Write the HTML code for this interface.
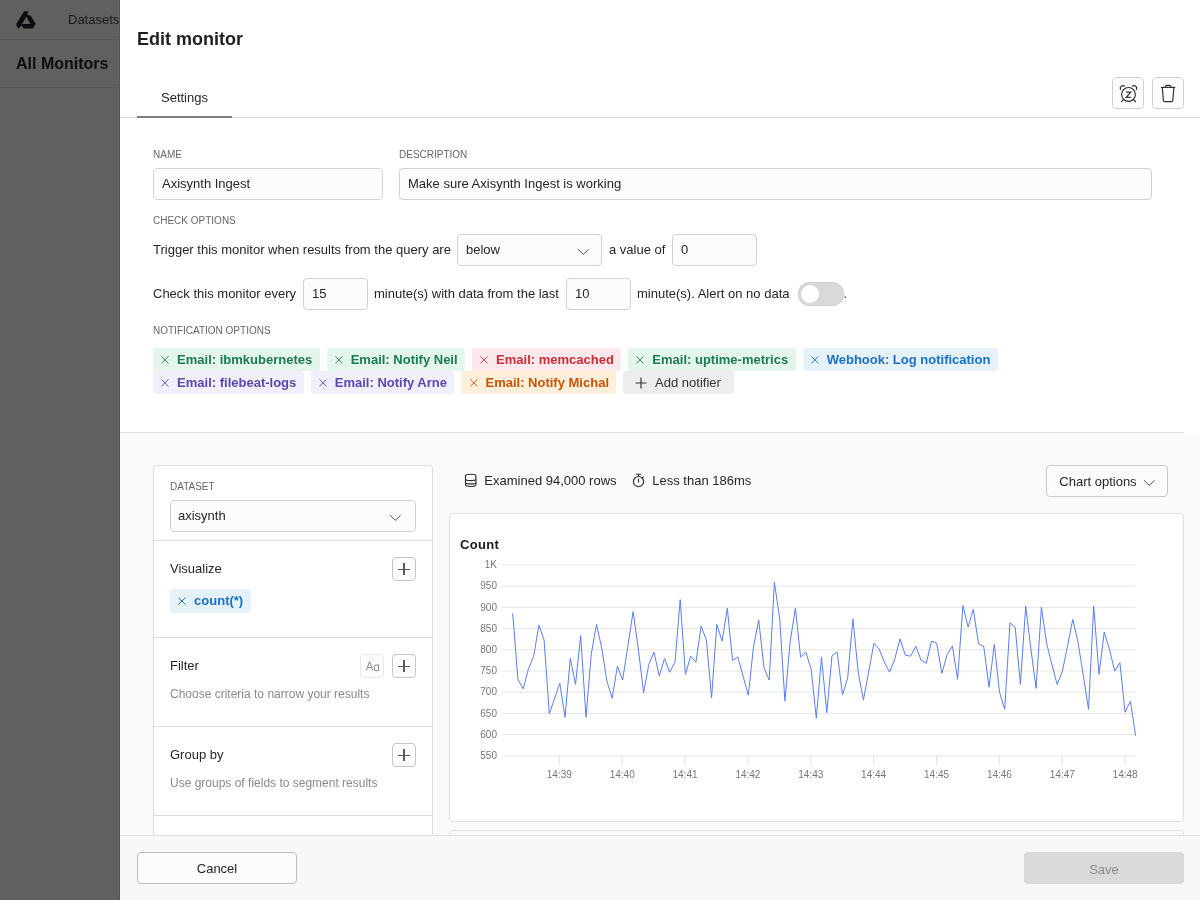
<!DOCTYPE html>
<html><head><meta charset="utf-8">
<style>
*{box-sizing:border-box;margin:0;padding:0}
html,body{width:1200px;height:900px;overflow:hidden;background:#fff}
#wrap{position:absolute;left:0;top:0;width:1200px;height:900px;will-change:transform}
body{font-family:"Liberation Sans",sans-serif;font-size:13px;color:#262626;position:relative}
.abs{position:absolute}
#side{left:0;top:0;width:120px;height:900px;background:#606060}
#side .hl{position:absolute;left:0;width:120px;height:1px;background:#575757}
.lbl{position:absolute;font-size:10px;color:#666;line-height:12px;white-space:nowrap}
.inp{position:absolute;height:32px;border:1px solid #d1d1d1;border-radius:4px;background:#fcfcfc;padding-left:8px;line-height:30px;color:#262626;white-space:nowrap}
.txt{position:absolute;line-height:16px;white-space:nowrap}
.ibtn{position:absolute;width:32px;height:32px;border:1px solid #d1d1d1;border-radius:4px;background:#fcfcfc}
.trow{position:absolute;left:153px;display:flex;gap:7px}
.tag{position:relative;height:22.7px;border-radius:3px;font-weight:bold;line-height:22px;padding-top:1px;white-space:nowrap;padding-left:24.1px;padding-right:7.4px}
.tag svg{position:absolute;left:8.2px;top:7.6px}
.g{background:#e4f5eb;color:#1d7a55}
.p{background:#f1eefd;color:#5a48b0}
.r{background:#fde9eb;color:#cc2b3a}
.o{background:#fdefda;color:#c95400}
.b{background:#e5f2fc;color:#1a70c8}
.sec{position:absolute;left:153px;width:280px;border-left:1px solid #dcdcdc;border-right:1px solid #dcdcdc;background:#fff}
.pbtn{position:absolute;width:24px;height:24px;border:1px solid #c4c4c4;border-radius:4px;background:#fcfcfc}
.pbtn:before{content:"";position:absolute;left:4.8px;top:10.6px;width:12.6px;height:1.3px;background:#5a5a5a}
.pbtn:after{content:"";position:absolute;left:10.45px;top:4.8px;width:1.3px;height:12.6px;background:#5a5a5a}
.yl{font-family:"Liberation Sans",sans-serif;font-size:10px;fill:#777}
</style></head><body><div id="wrap">
<div id="side" class="abs">
  <svg class="abs" style="left:0;top:0" width="40" height="40" viewBox="0 0 40 40"><path fill="#0b0b10" fill-rule="evenodd" d="M24 11.2L28.8 11.5L27.2 14.7L30.7 15.7L35.7 23.7L32.8 28.5L23.7 28.5L21.6 25.3L18.4 28.8L16 24.5ZM26.4 16.8L30.4 24L21.9 24Z"/></svg>
  <div class="txt" style="left:68px;top:12px;font-size:13px;color:#1a1a1a">Datasets</div>
  <div class="hl" style="top:39px"></div>
  <div class="txt" style="left:16px;top:55px;font-size:16px;font-weight:bold;color:#0d0d0d;line-height:18px">All Monitors</div>
  <div class="hl" style="top:87px"></div>
</div>

<div class="abs" style="left:119px;top:0;width:1px;height:900px;background:#545454"></div>
<!-- header -->
<div class="txt" style="left:137px;top:29px;font-size:18px;font-weight:bold;line-height:20px;color:#1f1f1f">Edit monitor</div>
<div class="txt" style="left:161px;top:90px;color:#262626">Settings</div>
<div class="abs" style="left:120px;top:117px;width:1080px;height:1px;background:#dedede"></div>
<div class="abs" style="left:137px;top:116px;width:95px;height:2px;background:#808080"></div>
<div class="ibtn" style="left:1112px;top:77px">
  <svg class="abs" style="left:-1px;top:-1px" width="32" height="32" viewBox="1112 77 32 32" fill="none" stroke="#333" stroke-width="1.2" stroke-linecap="round">
    <circle cx="1128.5" cy="94.4" r="6.9"/>
    <path d="M1120.5 89.4a2.7 2.7 0 0 1 4-3.3M1132.5 86.1a2.7 2.7 0 0 1 4 3.3M1123.4 99.6l-1.9 1.9M1133.6 99.6l1.9 1.9"/>
    <path d="M1126.1 92.1h4.7l-4.7 5.3h4.7" stroke-linejoin="miter" stroke-linecap="butt"/>
  </svg>
</div>
<div class="ibtn" style="left:1152px;top:77px">
  <svg class="abs" style="left:-1px;top:-1px" width="32" height="32" viewBox="1152 77 32 32" fill="none" stroke="#333" stroke-width="1.2" stroke-linecap="round" stroke-linejoin="round">
    <path d="M1161.4 87.3h13.4M1165.6 87.2v-.6a1.2 1.2 0 0 1 1.2-1.2h2.8a1.2 1.2 0 0 1 1.2 1.2v.6M1162.3 87.6l1.1 12.9q.1 1.1 1.2 1.1h7q1.1 0 1.2-1.1l1.1-12.9"/>
  </svg>
</div>

<!-- form -->
<div class="lbl" style="left:153px;top:149px">NAME</div>
<div class="lbl" style="left:399px;top:149px">DESCRIPTION</div>
<div class="inp" style="left:153px;top:168px;width:230px">Axisynth Ingest</div>
<div class="inp" style="left:399px;top:168px;width:753px">Make sure Axisynth Ingest is working</div>
<div class="lbl" style="left:153px;top:215px">CHECK OPTIONS</div>
<div class="txt" style="left:153px;top:242px">Trigger this monitor when results from the query are</div>
<div class="inp" style="left:457px;top:234px;width:145px">below
  <svg class="abs" style="left:119px;top:13px" width="13" height="8" viewBox="0 0 13 8"><path d="M1 1.3l5.3 5 5.3-5" fill="none" stroke="#444" stroke-width="0.95"/></svg>
</div>
<div class="txt" style="left:609px;top:242px">a value of</div>
<div class="inp" style="left:672px;top:234px;width:85px">0</div>
<div class="txt" style="left:153px;top:286px">Check this monitor every</div>
<div class="inp" style="left:303px;top:278px;width:65px">15</div>
<div class="txt" style="left:374px;top:286px">minute(s) with data from the last</div>
<div class="inp" style="left:566px;top:278px;width:65px">10</div>
<div class="txt" style="left:637px;top:286px">minute(s). Alert on no data</div>
<div class="abs" style="left:798px;top:282px;width:46px;height:24px;border-radius:12px;background:#d9d9d9;box-shadow:inset 0 0 0 1px #d0d0d0"></div>
<div class="abs" style="left:801px;top:285px;width:18px;height:18px;border-radius:9px;background:#fff"></div>
<div class="txt" style="left:843.6px;top:286px">.</div>
<div class="lbl" style="left:153px;top:325px">NOTIFICATION OPTIONS</div>

<!-- tags -->
<div class="trow" style="top:348px"><div class="tag g"><svg width="8" height="8" viewBox="0 0 8 8"><path d="M0.4 0.4l7 7M7.4 0.4l-7 7" stroke="currentColor" stroke-width="0.9"/></svg>Email: ibmkubernetes</div><div class="tag g"><svg width="8" height="8" viewBox="0 0 8 8"><path d="M0.4 0.4l7 7M7.4 0.4l-7 7" stroke="currentColor" stroke-width="0.9"/></svg>Email: Notify Neil</div><div class="tag r"><svg width="8" height="8" viewBox="0 0 8 8"><path d="M0.4 0.4l7 7M7.4 0.4l-7 7" stroke="currentColor" stroke-width="0.9"/></svg>Email: memcached</div><div class="tag g"><svg width="8" height="8" viewBox="0 0 8 8"><path d="M0.4 0.4l7 7M7.4 0.4l-7 7" stroke="currentColor" stroke-width="0.9"/></svg>Email: uptime-metrics</div><div class="tag b"><svg width="8" height="8" viewBox="0 0 8 8"><path d="M0.4 0.4l7 7M7.4 0.4l-7 7" stroke="currentColor" stroke-width="0.9"/></svg>Webhook: Log notification</div></div>
<div class="trow" style="top:371.4px"><div class="tag p"><svg width="8" height="8" viewBox="0 0 8 8"><path d="M0.4 0.4l7 7M7.4 0.4l-7 7" stroke="currentColor" stroke-width="0.9"/></svg>Email: filebeat-logs</div><div class="tag p"><svg width="8" height="8" viewBox="0 0 8 8"><path d="M0.4 0.4l7 7M7.4 0.4l-7 7" stroke="currentColor" stroke-width="0.9"/></svg>Email: Notify Arne</div><div class="tag o"><svg width="8" height="8" viewBox="0 0 8 8"><path d="M0.4 0.4l7 7M7.4 0.4l-7 7" stroke="currentColor" stroke-width="0.9"/></svg>Email: Notify Michal</div><div class="tag" style="background:#ededed;color:#333;font-weight:normal;padding-left:31.7px;padding-right:13.1px"><svg width="12" height="12" viewBox="0 0 12 12" style="left:12.1px;top:5.5px"><path d="M6 0.5v11M0.5 6h11" stroke="#333" stroke-width="1.2"/></svg>Add notifier</div></div>

<div class="abs" style="left:120px;top:432px;width:1064px;height:1px;background:#dedede"></div>
<div class="abs" style="left:120px;top:433px;width:1080px;height:402px;background:#fafafa"></div>

<!-- left query panel -->
<div class="sec" style="top:465px;height:76px;border-top:1px solid #dcdcdc;border-radius:4px 4px 0 0">
  <div class="lbl" style="left:16px;top:15px">DATASET</div>
  <div class="inp" style="left:16px;top:34px;width:246px;height:32px;padding-left:7px">axisynth
    <svg class="abs" style="left:218px;top:13px" width="13" height="8" viewBox="0 0 13 8"><path d="M1 1.3l5.3 5 5.3-5" fill="none" stroke="#444" stroke-width="0.95"/></svg>
  </div>
</div>
<div class="sec" style="top:540px;height:98px;border-top:1px solid #dcdcdc">
  <div class="txt" style="left:16px;top:20px">Visualize</div>
  <div class="pbtn" style="left:238px;top:16px"></div>
  <div class="tag b" style="position:absolute;left:16px;top:48px;height:24px;line-height:22px;padding-top:1px;padding-left:24.1px;padding-right:7.3px"><svg width="8" height="8" viewBox="0 0 8 8" style="top:8px"><path d="M0.5 0.5l7 7M7.5 0.5l-7 7" stroke="currentColor" stroke-width="1"/></svg>count(*)</div>
</div>
<div class="sec" style="top:637px;height:90px;border-top:1px solid #dcdcdc">
  <div class="txt" style="left:16px;top:20px">Filter</div>
  <div class="abs" style="left:206px;top:16px;width:24px;height:24px;border:1px solid #e8e8e8;border-radius:4px;background:#fcfcfc"><svg class="abs" style="left:-1px;top:-1px" width="24" height="24" viewBox="360 654 24 24" fill="none" stroke="#7a7a7a" stroke-width="0.9"><path d="M366.3 670.6L369.6 661.6L372.9 670.6M367.5 667.6h4.2"/><path d="M378.6 664.7v5.9M378.6 665h-2.4a1.9 1.9 0 0 0 -1.9 1.9v1.8a1.9 1.9 0 0 0 1.9 1.9h2.4"/></svg></div>
  <div class="pbtn" style="left:238px;top:16px"></div>
  <div class="txt" style="left:16px;top:48px;font-size:12px;color:#8a8a8a">Choose criteria to narrow your results</div>
</div>
<div class="sec" style="top:726px;height:90px;border-top:1px solid #dcdcdc">
  <div class="txt" style="left:16px;top:20px">Group by</div>
  <div class="pbtn" style="left:238px;top:16px"></div>
  <div class="txt" style="left:16px;top:48px;font-size:12px;color:#8a8a8a">Use groups of fields to segment results</div>
</div>
<div class="sec" style="top:815px;height:20px;border-top:1px solid #dcdcdc"></div>

<!-- chart area -->
<svg class="abs" style="left:460px;top:470px" width="20" height="20" viewBox="460 470 20 20" fill="none" stroke="#2a2a2a" stroke-width="1.1">
  <path d="M465.5 476a5.2 1.7 0 0 1 10.4 0v8.8a5.2 1.7 0 0 1 -10.4 0z"/>
  <path d="M465.5 479.3a5.2 1.3 0 0 0 10.4 0M465.5 482.4a5.2 1.5 0 0 0 10.4 0"/>
</svg>
<div class="txt" style="left:484.3px;top:473px">Examined 94,000 rows</div>
<svg class="abs" style="left:631px;top:472px" width="15" height="16" viewBox="0 0 15 16" fill="none" stroke="#333" stroke-width="1.1" stroke-linecap="round">
  <circle cx="7.5" cy="9.6" r="5.1"/>
  <path d="M5.3 2.3h4.4M7.5 2.3v2.2M7.5 7.1v3M11.2 6l1-1"/>
</svg>
<div class="txt" style="left:652.3px;top:473px">Less than 186ms</div>
<div class="abs" style="left:1046px;top:465px;width:122px;height:32px;border:1px solid #c9c9c9;border-radius:4px;background:#fcfcfc;padding-left:12.3px;padding-top:1px;line-height:30px">Chart options
  <svg class="abs" style="left:96px;top:13px" width="13" height="8" viewBox="0 0 13 8"><path d="M1 1.3l5.3 5 5.3-5" fill="none" stroke="#444" stroke-width="0.95"/></svg>
</div>
<div class="abs" style="left:449px;top:513px;width:735px;height:309px;border:1px solid #dedede;border-radius:4px;background:#fff"></div>
<div class="abs" style="left:449px;top:830px;width:735px;height:20px;border:1px solid #dedede;border-radius:4px;background:#fafafa"></div>
<div class="txt" style="left:460px;top:537px;font-weight:bold;font-size:13px;letter-spacing:0.3px;color:#1a1a1a">Count</div>
<!--CHART-->
<svg class="abs" style="left:0;top:0" width="1200" height="900" viewBox="0 0 1200 900">
<line x1="502" x2="1135.6" y1="565.0" y2="565.0" stroke="#e6e6e6" stroke-width="1"/>
<text x="497" y="568.2" text-anchor="end" class="yl">1K</text>
<line x1="502" x2="1135.6" y1="586.2" y2="586.2" stroke="#e6e6e6" stroke-width="1"/>
<text x="497" y="589.4" text-anchor="end" class="yl">950</text>
<line x1="502" x2="1135.6" y1="607.4" y2="607.4" stroke="#e6e6e6" stroke-width="1"/>
<text x="497" y="610.6" text-anchor="end" class="yl">900</text>
<line x1="502" x2="1135.6" y1="628.6" y2="628.6" stroke="#e6e6e6" stroke-width="1"/>
<text x="497" y="631.8" text-anchor="end" class="yl">850</text>
<line x1="502" x2="1135.6" y1="649.8" y2="649.8" stroke="#e6e6e6" stroke-width="1"/>
<text x="497" y="653.0" text-anchor="end" class="yl">800</text>
<line x1="502" x2="1135.6" y1="671.0" y2="671.0" stroke="#e6e6e6" stroke-width="1"/>
<text x="497" y="674.2" text-anchor="end" class="yl">750</text>
<line x1="502" x2="1135.6" y1="692.2" y2="692.2" stroke="#e6e6e6" stroke-width="1"/>
<text x="497" y="695.4" text-anchor="end" class="yl">700</text>
<line x1="502" x2="1135.6" y1="713.4" y2="713.4" stroke="#e6e6e6" stroke-width="1"/>
<text x="497" y="716.6" text-anchor="end" class="yl">650</text>
<line x1="502" x2="1135.6" y1="734.6" y2="734.6" stroke="#e6e6e6" stroke-width="1"/>
<text x="497" y="737.8" text-anchor="end" class="yl">600</text>
<line x1="502" x2="1135.6" y1="755.8" y2="755.8" stroke="#e6e6e6" stroke-width="1"/>
<text x="497" y="759.0" text-anchor="end" class="yl">550</text>
<line x1="559.3" x2="559.3" y1="756" y2="765" stroke="#e0e0e0" stroke-width="1"/>
<text x="559.3" y="778" text-anchor="middle" class="yl">14:39</text>
<line x1="622.2" x2="622.2" y1="756" y2="765" stroke="#e0e0e0" stroke-width="1"/>
<text x="622.2" y="778" text-anchor="middle" class="yl">14:40</text>
<line x1="685.0" x2="685.0" y1="756" y2="765" stroke="#e0e0e0" stroke-width="1"/>
<text x="685.0" y="778" text-anchor="middle" class="yl">14:41</text>
<line x1="747.9" x2="747.9" y1="756" y2="765" stroke="#e0e0e0" stroke-width="1"/>
<text x="747.9" y="778" text-anchor="middle" class="yl">14:42</text>
<line x1="810.8" x2="810.8" y1="756" y2="765" stroke="#e0e0e0" stroke-width="1"/>
<text x="810.8" y="778" text-anchor="middle" class="yl">14:43</text>
<line x1="873.6" x2="873.6" y1="756" y2="765" stroke="#e0e0e0" stroke-width="1"/>
<text x="873.6" y="778" text-anchor="middle" class="yl">14:44</text>
<line x1="936.5" x2="936.5" y1="756" y2="765" stroke="#e0e0e0" stroke-width="1"/>
<text x="936.5" y="778" text-anchor="middle" class="yl">14:45</text>
<line x1="999.4" x2="999.4" y1="756" y2="765" stroke="#e0e0e0" stroke-width="1"/>
<text x="999.4" y="778" text-anchor="middle" class="yl">14:46</text>
<line x1="1062.3" x2="1062.3" y1="756" y2="765" stroke="#e0e0e0" stroke-width="1"/>
<text x="1062.3" y="778" text-anchor="middle" class="yl">14:47</text>
<line x1="1125.1" x2="1125.1" y1="756" y2="765" stroke="#e0e0e0" stroke-width="1"/>
<text x="1125.1" y="778" text-anchor="middle" class="yl">14:48</text>
<polyline fill="none" stroke="#5b7cf8" stroke-width="1" stroke-linejoin="miter" points="512.7,613.3 517.9,679.3 523.2,688.9 528.4,668.9 533.6,656.7 538.9,625.1 544.1,640.0 549.3,713.8 554.6,698.5 559.8,683.3 565.0,717.3 570.3,658.4 575.5,684.4 580.7,635.6 586.0,717.3 591.2,654.4 596.5,624.4 601.7,647.8 606.9,681.1 612.2,698.2 617.4,666.2 622.6,680.0 627.9,645.8 633.1,611.6 638.3,648.9 643.6,692.7 648.8,664.4 654.0,652.2 659.3,676.0 664.5,658.4 669.7,672.2 675.0,662.2 680.2,599.6 685.4,674.4 690.7,656.2 695.9,662.2 701.1,626.2 706.4,640.0 711.6,697.8 716.8,624.4 722.1,641.1 727.3,608.2 732.5,660.4 737.8,657.1 743.0,676.0 748.3,695.1 753.5,646.7 758.7,620.0 764.0,667.8 769.2,680.0 774.4,582.2 779.7,618.9 784.9,701.1 790.1,642.2 795.4,608.2 800.6,657.1 805.8,652.2 811.1,668.9 816.3,718.2 821.5,657.1 826.8,712.7 832.0,655.6 837.2,652.2 842.5,694.9 847.7,677.8 852.9,618.9 858.2,672.2 863.4,700.0 868.6,672.2 873.9,643.3 879.1,648.9 884.3,662.2 889.6,672.2 894.8,658.9 900.0,638.9 905.3,655.1 910.5,656.2 915.8,646.2 921.0,660.0 926.2,663.3 931.5,641.1 936.7,643.3 941.9,673.3 947.2,654.4 952.4,646.2 957.6,679.3 962.9,605.6 968.1,627.1 973.3,609.3 978.6,644.0 983.8,646.7 989.0,687.3 994.3,644.4 999.5,692.2 1004.7,709.3 1010.0,622.7 1015.2,627.3 1020.4,684.4 1025.7,606.2 1030.9,648.9 1036.1,688.4 1041.4,607.3 1046.6,643.3 1051.8,664.0 1057.1,684.4 1062.3,671.8 1067.6,645.5 1072.8,619.3 1078.0,642.2 1083.3,675.5 1088.5,709.3 1093.7,606.2 1099.0,674.4 1104.2,632.2 1109.4,648.9 1114.7,671.1 1119.9,662.7 1125.1,712.2 1130.4,701.1 1135.6,735.6"/>
</svg>
<!--/CHART-->

<!-- footer -->
<div class="abs" style="left:120px;top:835px;width:1080px;height:65px;background:#f8f8f8;border-top:1px solid #dedede"></div>
<div class="abs" style="left:137px;top:852px;width:160px;height:32px;border:1px solid #bdbdbd;border-radius:4px;background:#fcfcfc;text-align:center;line-height:30px;padding-top:1px;color:#262626">Cancel</div>
<div class="abs" style="left:1024px;top:852px;width:160px;height:32px;border-radius:4px;background:#d9d9d9;text-align:center;line-height:32px;padding-top:1.5px;color:#8a8a8a">Save</div>
</div></body></html>
